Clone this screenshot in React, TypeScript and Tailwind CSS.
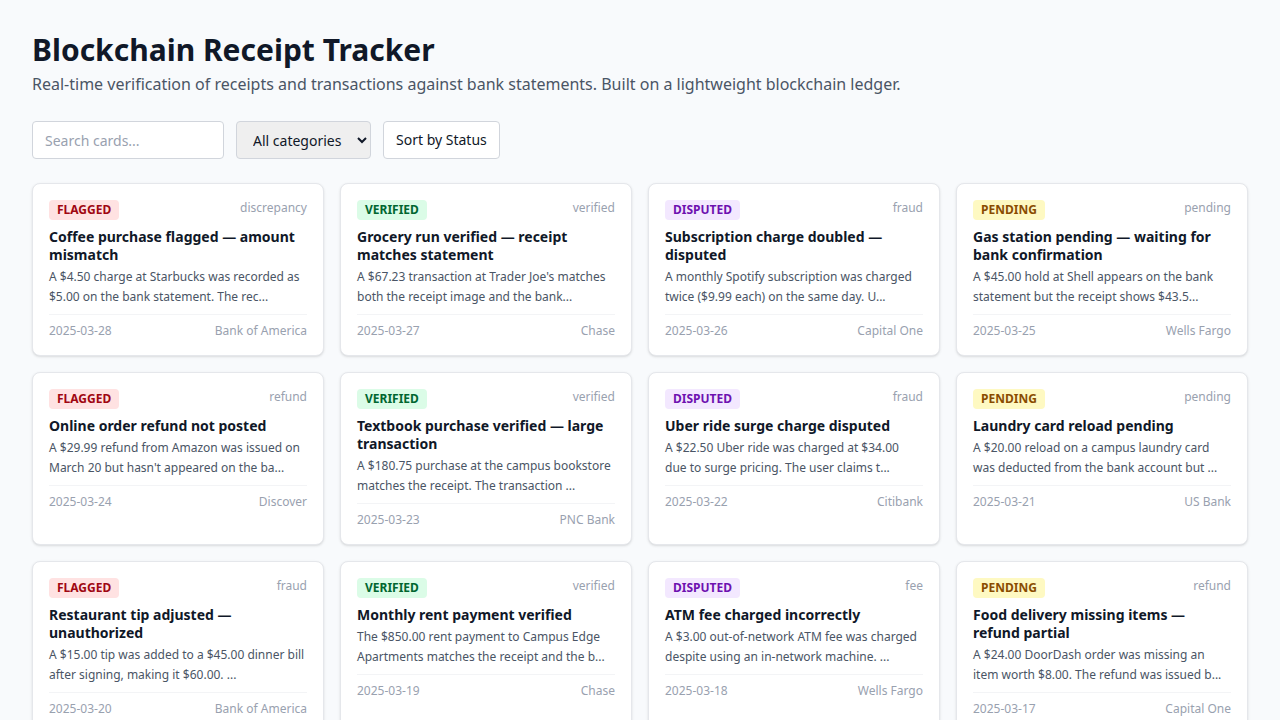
import { useState } from "react";

type Status = "flagged" | "verified" | "disputed" | "pending";

interface Receipt {
  status: Status;
  category: string;
  title: string;
  description: string;
  date: string;
  bank: string;
}

const statusStyles: Record<Status, string> = {
  flagged: "bg-red-100 text-red-800",
  verified: "bg-green-100 text-green-800",
  disputed: "bg-purple-100 text-purple-800",
  pending: "bg-yellow-100 text-yellow-800",
};

const receipts: Receipt[] = [
  {
    status: "flagged",
    category: "discrepancy",
    title: "Coffee purchase flagged — amount mismatch",
    description: "A $4.50 charge at Starbucks was recorded as $5.00 on the bank statement. The rec...",
    date: "2025-03-28",
    bank: "Bank of America",
  },
  {
    status: "verified",
    category: "verified",
    title: "Grocery run verified — receipt matches statement",
    description: "A $67.23 transaction at Trader Joe's matches both the receipt image and the bank...",
    date: "2025-03-27",
    bank: "Chase",
  },
  {
    status: "disputed",
    category: "fraud",
    title: "Subscription charge doubled — disputed",
    description: "A monthly Spotify subscription was charged twice ($9.99 each) on the same day. U...",
    date: "2025-03-26",
    bank: "Capital One",
  },
  {
    status: "pending",
    category: "pending",
    title: "Gas station pending — waiting for bank confirmation",
    description: "A $45.00 hold at Shell appears on the bank statement but the receipt shows $43.5...",
    date: "2025-03-25",
    bank: "Wells Fargo",
  },
  {
    status: "flagged",
    category: "refund",
    title: "Online order refund not posted",
    description: "A $29.99 refund from Amazon was issued on March 20 but hasn't appeared on the ba...",
    date: "2025-03-24",
    bank: "Discover",
  },
  {
    status: "verified",
    category: "verified",
    title: "Textbook purchase verified — large transaction",
    description: "A $180.75 purchase at the campus bookstore matches the receipt. The transaction ...",
    date: "2025-03-23",
    bank: "PNC Bank",
  },
  {
    status: "disputed",
    category: "fraud",
    title: "Uber ride surge charge disputed",
    description: "A $22.50 Uber ride was charged at $34.00 due to surge pricing. The user claims t...",
    date: "2025-03-22",
    bank: "Citibank",
  },
  {
    status: "pending",
    category: "pending",
    title: "Laundry card reload pending",
    description: "A $20.00 reload on a campus laundry card was deducted from the bank account but ...",
    date: "2025-03-21",
    bank: "US Bank",
  },
  {
    status: "flagged",
    category: "fraud",
    title: "Restaurant tip adjusted — unauthorized",
    description: "A $15.00 tip was added to a $45.00 dinner bill after signing, making it $60.00. ...",
    date: "2025-03-20",
    bank: "Bank of America",
  },
  {
    status: "verified",
    category: "verified",
    title: "Monthly rent payment verified",
    description: "The $850.00 rent payment to Campus Edge Apartments matches the receipt and the b...",
    date: "2025-03-19",
    bank: "Chase",
  },
  {
    status: "disputed",
    category: "fee",
    title: "ATM fee charged incorrectly",
    description: "A $3.00 out-of-network ATM fee was charged despite using an in-network machine. ...",
    date: "2025-03-18",
    bank: "Wells Fargo",
  },
  {
    status: "pending",
    category: "refund",
    title: "Food delivery missing items — refund partial",
    description: "A $24.00 DoorDash order was missing an item worth $8.00. The refund was issued b...",
    date: "2025-03-17",
    bank: "Capital One",
  },
];

function ReceiptCard({ r }: { r: Receipt }) {
  return (
    <div className="rounded-lg border border-gray-200 bg-white p-4 shadow-sm">
      <div className="mb-2 flex items-start justify-between">
        <span className={`rounded px-2 py-0.5 text-xs font-bold uppercase ${statusStyles[r.status]}`}>
          {r.status}
        </span>
        <span className="text-xs text-gray-400">{r.category}</span>
      </div>
      <h3 className="mb-[3px] text-sm font-bold leading-[18px] text-gray-900">{r.title}</h3>
      <p className="text-xs leading-5 text-gray-600">{r.description}</p>
      <div className="mt-[7px] flex justify-between border-t border-gray-100 pt-2 text-xs text-gray-400">
        <span>{r.date}</span>
        <span>{r.bank}</span>
      </div>
    </div>
  );
}

export default function App() {
  const [query, setQuery] = useState("");

  return (
    <div className="min-h-screen bg-[#f8fafc] p-8 font-['Noto_Sans',sans-serif]">
      <h1 className="text-3xl font-bold text-gray-900">Blockchain Receipt Tracker</h1>
      <p className="mt-1 text-base text-gray-600">
        Real-time verification of receipts and transactions against bank statements. Built on a lightweight blockchain ledger.
      </p>

      <div className="mt-[25px] mb-6 flex items-center gap-3">
        <input
          value={query}
          onChange={(e) => setQuery(e.target.value)}
          placeholder="Search cards..."
          className="h-[38px] w-48 rounded border border-gray-300 bg-white px-3 text-sm text-gray-900 placeholder:text-gray-400"
        />
        <select className="h-[38px] rounded border border-gray-300 bg-[#efefef] px-3 text-sm text-gray-900">
          <option>All categories</option>
          <option>discrepancy</option>
          <option>fraud</option>
          <option>refund</option>
        </select>
        <button className="h-[38px] rounded border border-gray-300 bg-white px-3 text-sm text-gray-900">
          Sort by Status
        </button>
      </div>

      <div className="grid grid-cols-4 gap-4">
        {receipts.map((r) => (
          <ReceiptCard key={r.title} r={r} />
        ))}
      </div>
    </div>
  );
}
